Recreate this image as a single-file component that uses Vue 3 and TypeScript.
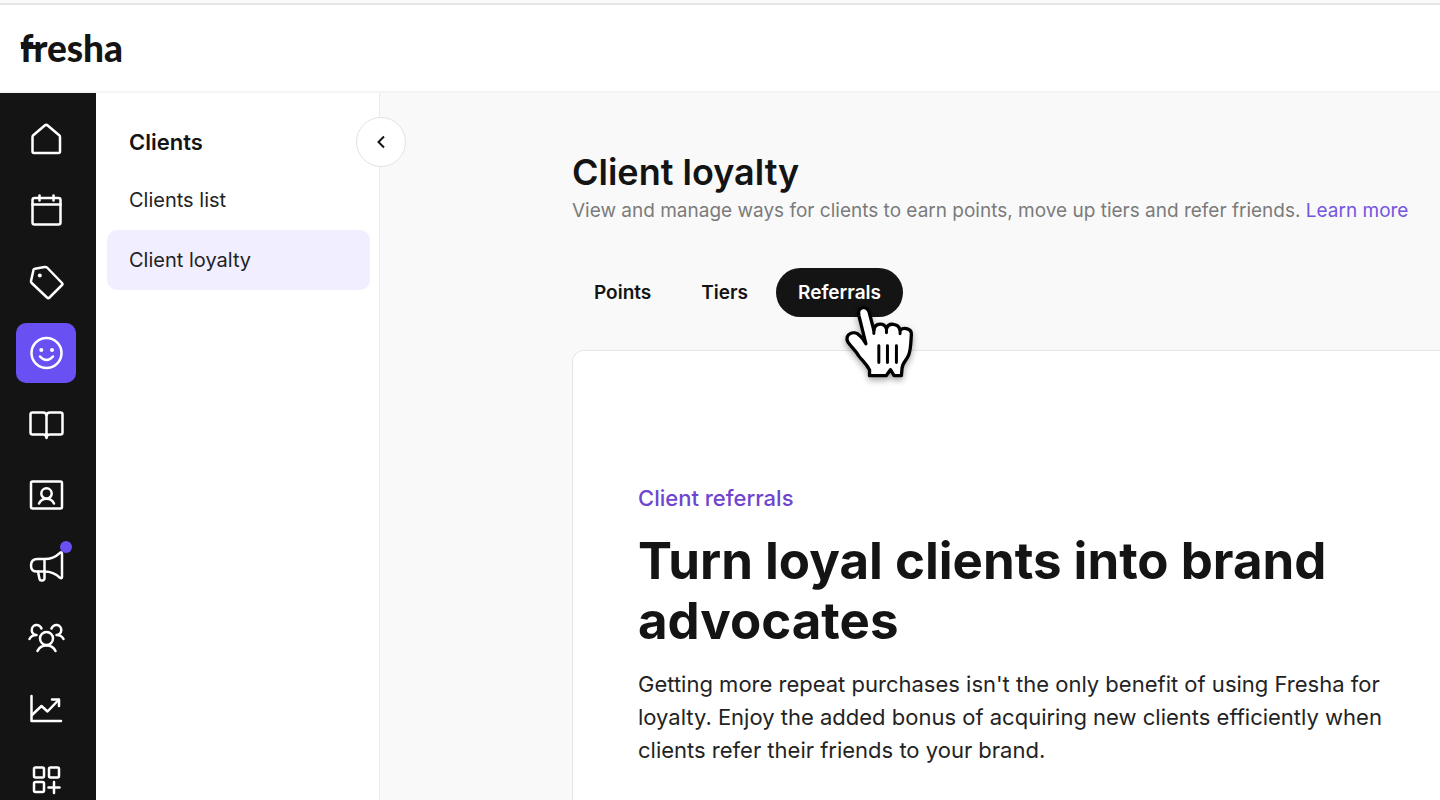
<script setup lang="ts">
import { ref } from 'vue'

interface NavItem {
  label: string
  paths: string[]
  dots?: [number, number][]
  badge?: boolean
}

const navItems: NavItem[] = [
  { label: 'Home', paths: ['M5.500 16v14.500a1.500 1.500 0 0 0 1.500 1.500h24.500a1.500 1.500 0 0 0 1.500-1.500V16q0-1-.8-1.800L20.700 4.500q-1.500-1.200-3 0L6.300 14.200Q5.500 15 5.500 16Z'] },
  { label: 'Calendar', paths: ['M7.500 6h24q2 0 2 2v22.500q0 2-2 2h-24q-2 0-2-2V8q0-2 2-2Z', 'M5.500 12.500h28', 'M12.500 3.500v5', 'M26.500 3.500v5'] },
  { label: 'Sales', paths: ['M6.500 7Q6.600 6 8 5.700L17.500 4Q19 3.800 20 4.500L35 20Q36 21 35 22L22.500 34.500Q21.300 35.700 20 34.500L4.700 20Q3.800 19.200 4 18Z'], dots: [[12.800, 12.500]] },
  { label: 'Clients', paths: ['M34.500 19a15 15 0 1 1-30 0a15 15 0 0 1 30 0Z', 'M13 22.500Q19.500 29.500 26 22.500'], dots: [[14.300, 16], [25, 16]] },
  { label: 'Catalog', paths: ['M19.500 11Q19.500 7.500 16 7.500H5.500Q3.500 7.500 3.500 9.500v18q0 2 2 2h10.500Q19.500 29.500 19.500 33Q19.500 29.500 23 29.500H33.500q2 0 2-2v-18q0-2-2-2H23Q19.500 7.500 19.500 11V32'] },
  { label: 'Online booking', paths: ['M5.500 5.500h28q1.500 0 1.500 1.500v24q0 1.500-1.500 1.500h-28q-1.500 0-1.500-1.500V7Q4 5.500 5.500 5.500Z', 'M24.700 17.500a5.200 5.200 0 1 1-10.400 0a5.200 5.200 0 0 1 10.400 0Z', 'M12 27.500q2-4.800 7.500-4.800t7.500 4.800'] },
  { label: 'Marketing', paths: ['M17.500 12H10.500q-6.500 0-6.500 6.500T10.500 24.500h7V12q9 0 15.500-6.200Q35 4.500 35 7v23q0 2-2 .8Q26.500 24.500 17.500 24.500', 'M11 24.500l1.500 7.500q.3 1.500 2 1.500h1q2-.3 2-2.500v-6.500'], badge: true },
  { label: 'Team', paths: ['M26 20.500a6.500 6.500 0 1 1-13 0a6.500 6.500 0 0 1 13 0Z', 'M10.500 33q2.500-5.500 9-5.500t9 5.500', 'M2.500 21q2-4 7-4a5 5 0 1 1 5-6.500', 'M36.500 21q-2-4-7-4a5 5 0 1 0-5-6.500'] },
  { label: 'Reports', paths: ['M4.500 7v25h29.500', 'M5 26l9.500-9l6 5.500L31.500 11', 'M25 10.500H32V17'] },
  { label: 'Add-ons', paths: ['M8.500 7.500h7q1.500 0 1.500 1.500v7q0 1.500-1.500 1.500h-7q-1.500 0-1.500-1.500V9Q7 7.500 8.500 7.500Z', 'M23.500 7.500h7q1.500 0 1.500 1.500v7q0 1.500-1.500 1.500h-7q-1.500 0-1.500-1.500V9q0-1.500 1.500-1.500Z', 'M8.500 22h7q1.500 0 1.500 1.500v7q0 1.500-1.500 1.500h-7q-1.500 0-1.500-1.500v-7Q7 22 8.500 22Z', 'M27 22v11', 'M21.500 27.500h11'] },
]

const activeNav = ref('Clients')
const tabs = ['Points', 'Tiers', 'Referrals']
const activeTab = ref('Referrals')
</script>

<template>
  <div class="app">
    <header class="topbar">
      <a class="logo" href="#">
        <svg width="110" height="48" viewBox="0 0 110 48" role="img" aria-label="fresha">
          <text x="0" y="38">fresha</text>
          <rect x="1" y="21" width="18" height="4" />
        </svg>
      </a>
    </header>
    <div class="body">
      <nav class="rail" aria-label="Main">
        <button
          v-for="item in navItems"
          :key="item.label"
          type="button"
          class="rail-item"
          :class="{ active: item.label === activeNav }"
          :aria-label="item.label"
          @click="activeNav = item.label"
        >
          <svg class="rail-icon" viewBox="0 0 38 38" aria-hidden="true">
            <path v-for="d in item.paths" :key="d" :d="d" />
            <circle v-for="dot in item.dots" :key="dot[0]" class="dot" :cx="dot[0]" :cy="dot[1]" r="2" />
          </svg>
          <span v-if="item.badge" class="badge"></span>
        </button>
      </nav>

      <aside class="side">
        <h2 class="side-title">Clients</h2>
        <a class="side-link" href="#">Clients list</a>
        <a class="side-link current" href="#">Client loyalty</a>
        <button class="collapse" type="button" aria-label="Collapse menu">
          <svg viewBox="0 0 18 18" aria-hidden="true"><path d="M12 3.500L6.500 9l5.500 5.500" /></svg>
        </button>
      </aside>

      <main class="main">
        <h1 class="title">Client loyalty</h1>
        <p class="subtitle">
          View and manage ways for clients to earn points, move up tiers and refer friends.
          <a href="#">Learn more</a>
        </p>
        <div class="tabs" role="tablist">
          <button
            v-for="tab in tabs"
            :key="tab"
            type="button"
            role="tab"
            class="tab"
            :class="{ selected: tab === activeTab }"
            :aria-selected="tab === activeTab"
            @click="activeTab = tab"
          >
            {{ tab }}
          </button>
          <svg class="pointer" viewBox="30 40 230 235" aria-hidden="true">
            <path
              class="hand"
              d="M107 163L86 78C80 50 110 46 117 68L131 122C134 98 164 98 169 118C174 98 205 100 210 122C222 112 246 116 244 136C242 160 243 178 236 196C230 212 217 220 216 236L214 259L192 259L181 241L168 259L118 259L118 242C108 222 96 214 86 200C74 180 62 172 53 158C40 134 72 120 88 138Q98 146 107 163Z"
            />
            <path class="finger" d="M131 118V132M169 118V130M210 120V133M146 169V219M172 169V219M199 169V219" />
          </svg>
        </div>
        <section class="card">
          <p class="eyebrow">Client referrals</p>
          <h2 class="headline">Turn loyal clients into brand advocates</h2>
          <p class="copy">
            Getting more repeat purchases isn't the only benefit of using Fresha for loyalty. Enjoy
            the added bonus of acquiring new clients efficiently when clients refer their friends to
            your brand.
          </p>
        </section>
      </main>
    </div>
  </div>
</template>

<style>
body {
  margin: 0;
}
</style>

<style scoped>
.app {
  display: flex;
  flex-direction: column;
  height: 100vh;
  overflow: hidden;
  color: #141414;
  background: #fff;
  font-family: Inter, "Liberation Sans", sans-serif;
}

h1, h2, p {
  margin: 0;
}

a {
  text-decoration: none;
}

.topbar {
  flex: none;
  display: flex;
  align-items: center;
  box-sizing: border-box;
  height: 93px;
  padding: 4px 20px 0;
  border-top: 1px solid #fafafa;
  border-bottom: 2px solid #f5f5f5;
  box-shadow: inset 0 2px #fafafa, inset 0 4px #e5e5e5;
}

.logo svg {
  display: block;
  fill: #141414;
  font: 900 37px Lato, sans-serif;
}

.body {
  flex: 1;
  display: flex;
  min-height: 0;
}

.rail {
  flex: none;
  display: flex;
  flex-direction: column;
  gap: 11px;
  box-sizing: border-box;
  width: 96px;
  padding: 17px 0 0 16px;
  overflow: hidden;
  background: #141414;
}

.rail-item {
  position: relative;
  flex: none;
  display: flex;
  align-items: center;
  justify-content: center;
  width: 60px;
  height: 60px;
  padding: 0;
  border: 0;
  border-radius: 10px;
  background: none;
}

.rail-item.active {
  background: #6950f3;
}

.rail-icon {
  width: 38px;
  height: 38px;
  fill: none;
  stroke: #fff;
  stroke-width: 2.5;
  stroke-linecap: round;
  stroke-linejoin: round;
}

.dot {
  fill: #fff;
  stroke: none;
}

.badge {
  position: absolute;
  top: 5px;
  right: 4px;
  width: 12px;
  height: 12px;
  border-radius: 50%;
  background: #6950f3;
}

.side {
  position: relative;
  flex: none;
  box-sizing: border-box;
  width: 284px;
  padding: 19px 9px 19px 11px;
  border-right: 1px solid #ebebeb;
}

.side-title {
  height: 58px;
  padding: 0 22px;
  font-size: 22px;
  font-weight: 600;
  line-height: 60px;
}

.side-link {
  display: block;
  padding: 0 22px;
  border-radius: 10px;
  color: #232323;
  font-size: 20px;
  line-height: 60px;
}

.side-link.current {
  background: #f0eeff;
}

.collapse {
  position: absolute;
  top: 24px;
  right: -27px;
  display: flex;
  align-items: center;
  justify-content: center;
  width: 50px;
  height: 50px;
  padding: 0;
  border: 1px solid #e2e2e2;
  border-radius: 50%;
  background: #fff;
}

.collapse svg {
  width: 18px;
  height: 18px;
  fill: none;
  stroke: #141414;
  stroke-width: 2;
}

.main {
  flex: 1;
  display: flex;
  flex-direction: column;
  min-width: 0;
  padding: 55px 0 0 192px;
  background: #f9f9f9;
}

.title {
  font-size: 36px;
  font-weight: 600;
  line-height: 48px;
}

.subtitle {
  color: #7b7b7b;
  font-size: 19px;
  line-height: 30px;
  white-space: nowrap;
}

.subtitle a {
  color: #7456df;
}

.tabs {
  position: relative;
  display: flex;
  gap: 6px;
  margin-top: 42px;
}

.tab {
  height: 49px;
  padding: 0 22px;
  border: 0;
  border-radius: 25px;
  color: #141414;
  background: none;
  font: 600 19px/24px Inter, "Liberation Sans", sans-serif;
}

.tab.selected {
  color: #fff;
  background: #141414;
}

.pointer {
  position: absolute;
  top: 35px;
  left: 268px;
  width: 77px;
  height: 78px;
  filter: drop-shadow(0 3px 3px rgb(0 0 0 / 35%));
}

.hand {
  fill: #fff;
  stroke: #000;
  stroke-width: 10;
  stroke-linejoin: round;
}

.finger {
  fill: none;
  stroke: #000;
  stroke-width: 9;
  stroke-linecap: round;
}

.card {
  flex: 1;
  padding: 131px 48px 0 65px;
  margin-top: 33px;
  border: 1px solid #e6e6e6;
  border-width: 1px 0 0 1px;
  border-top-left-radius: 12px;
  background: #fff;
}

.eyebrow {
  color: #6f45cf;
  font-size: 22px;
  font-weight: 500;
  line-height: 32px;
}

.headline {
  max-width: 752px;
  margin-top: 17px;
  font-size: 51px;
  font-weight: 700;
  line-height: 60px;
}

.copy {
  max-width: 752px;
  margin-top: 17px;
  color: #232323;
  font-size: 22px;
  line-height: 33px;
}
</style>
